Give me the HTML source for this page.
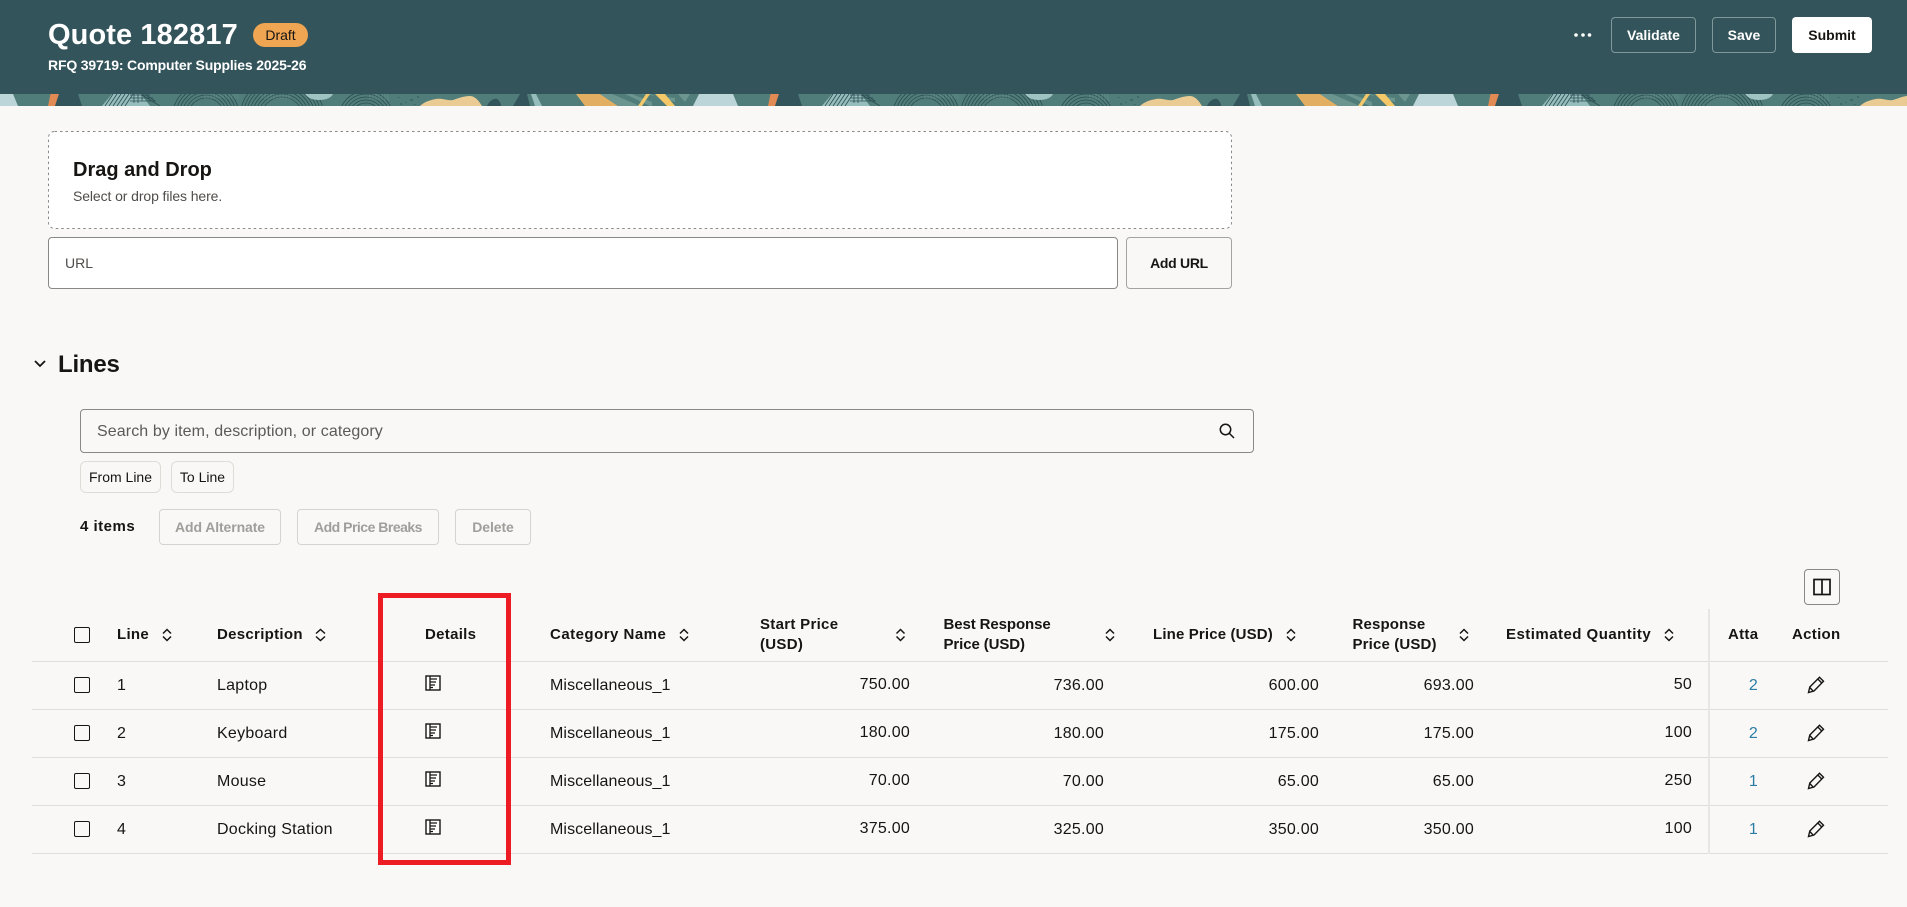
<!DOCTYPE html>
<html lang="en">
<head>
<meta charset="utf-8">
<title>Quote 182817</title>
<style>
*{box-sizing:border-box}
html,body{margin:0;padding:0;width:1907px;height:907px;overflow:hidden;background:#faf8f6;font-family:"Liberation Sans",sans-serif;color:#161513}
.a{position:absolute;white-space:nowrap}
.hd{position:absolute;left:0;top:0;width:1907px;height:94px;background:#33545a}
.btn{position:absolute;display:flex;align-items:center;justify-content:center;border-radius:4px;font-size:14px;font-weight:700;white-space:nowrap}
.t{position:absolute;font-size:16px;line-height:20px;letter-spacing:.25px;white-space:nowrap}
.c{letter-spacing:.09px}
.r{text-align:right}
.h{position:absolute;font-size:15px;font-weight:700;line-height:20px;letter-spacing:.3px;white-space:nowrap}
.line{position:absolute;left:32px;width:1856px;height:1px;background:#dfddda}
.cb{position:absolute;left:74px;width:16px;height:16px;border:1.6px solid #161513;border-radius:2px}
.link{color:#2a7da6}
svg{position:absolute;overflow:visible}
</style>
</head>
<body>
<div class="hd"></div>
<svg style="left:0;top:94px;overflow:hidden" width="1907" height="12" viewBox="0 0 1907 12">
<defs>
<clipPath id="c"><rect width="1907" height="12"/></clipPath>
<g id="p">
<path d="M0 0H13L18 12H0Z" fill="#bcd5d9"/>
<path d="M50.500 0H59L55 12H48Z" fill="#e28a54"/>
<path d="M59 0H78L82 12H55Z" fill="#33545a"/>
<path d="M112 0H141L150 12H102Z" fill="#94bdbc"/>
<g fill="none" stroke="#2c4c52" stroke-width=".8">
<path d="M113 0 105 12M117 0 109 12M121 0 113 12M125 0 117 12M129 0 121 12M133 0 125 12"/>
<path d="M130 1H150M130 4H153M130 7H156M134 0V9M138 0V9M142 0V7"/>
<path d="M142 1 160 12M146 1 155 7"/>
<circle cx="206" cy="22" r="33"/><circle cx="206" cy="22" r="30"/><circle cx="206" cy="22" r="27"/><circle cx="206" cy="22" r="24"/><circle cx="206" cy="22" r="21"/><circle cx="206" cy="22" r="18"/>
<circle cx="282" cy="24" r="42"/><circle cx="282" cy="24" r="39"/><circle cx="282" cy="24" r="36"/><circle cx="282" cy="24" r="33"/><circle cx="282" cy="24" r="30"/><circle cx="282" cy="24" r="27"/><circle cx="282" cy="24" r="24"/><circle cx="282" cy="24" r="21"/>
<circle cx="366" cy="24" r="27"/><circle cx="366" cy="24" r="24"/><circle cx="366" cy="24" r="21"/><circle cx="366" cy="24" r="18"/><circle cx="366" cy="24" r="15"/>
</g>
<g fill="none" stroke="#7fa8a5" stroke-width=".6" opacity=".6">
<path d="M205 0V5M208 0V5M211 0V5M214 0V5M217 0V4M220 0V4M223 0V4M226 0V4M229 0V5M232 0V5M235 0V5M238 0V5"/>
<path d="M262 0V5M265 0V5M268 0V5M271 0V5M274 0V5M277 0V5M280 0V5M283 0V5M286 0V5M289 0V5"/>
<path d="M370 0V5M373 0V5M376 0V6M379 0V6M382 0V6M385 0V7M388 0V7"/>
</g>
<path d="M305 0H333C331 4 326 6 319 6 312 6 308 4 305 0Z" fill="#9fc3c2"/>
<path d="M398 3h2v1h-2zM410 5h3v2h-3zM405 8h2v1h-2zM417 2h2v2h-2zM400 9h2v2h-2zM414 10h2v1h-2z" fill="#3e6a68"/>
</g>
<g id="q">
<path d="M420 12C424 8 430 6 436 5 443 4 448 7 453 6 459 4 464 2 470 2 475 2 479 7 482 12Z" fill="#ebcb94"/>
<path d="M487 12C489 7 494 4 497 5 500 7 501 10 501 12Z" fill="#33545a"/>
<path d="M520 0H527L530 12H513Z" fill="#33545a"/>
<path d="M531 0H536L542 12H535Z" fill="#94bdbc"/>
<path d="M576 0H600L618 12H585Z" fill="#e2ae62"/>
<path d="M600 0H612L640 12H618ZM625 0H632L652 8V12H650ZM640 0H650L675 8V4Z" fill="#6c9590"/>
<path d="M646 0H650L642 12H638Z" fill="#f4c868"/>
<path d="M655 0H665L675 12H667Z" fill="#f4c868"/>
<path d="M678 0H690L685 8Z" fill="#6c9590"/>
<path d="M699 0H720V12H693Z" fill="#bcd5d9"/>
</g>
</defs>
<g clip-path="url(#c)">
<rect width="1907" height="12" fill="#507d79"/>
<use href="#p"/><use href="#q"/>
<use href="#p" x="720"/><use href="#q" x="720"/>
<use href="#p" x="1440"/>
<path d="M1860 12C1864 8 1870 6 1876 5 1883 4 1888 7 1893 6 1899 4 1904 2 1907 2V12Z" fill="#ebcb94"/>
</g>
</svg>

<div class="a" style="left:48px;top:18px;font-size:29px;line-height:34px;font-weight:700;color:#fff;letter-spacing:.1px">Quote 182817</div>
<div class="a" style="left:253px;top:23px;width:55px;height:24px;background:#efa552;border-radius:12px;font-size:14px;line-height:24px;text-align:center;color:#161513">Draft</div>
<div class="a" style="left:48px;top:55px;font-size:14px;line-height:20px;font-weight:700;color:#fff;letter-spacing:-.17px">RFQ 39719: Computer Supplies 2025-26</div>

<svg style="left:1574px;top:33px" width="18" height="4" viewBox="0 0 18 4" fill="#fff"><circle cx="2" cy="2" r="1.8"/><circle cx="9" cy="2" r="1.8"/><circle cx="15.500" cy="2" r="1.8"/></svg>
<div class="btn" style="left:1611px;top:17px;width:85px;height:36px;border:1px solid #7f989b;color:#fff">Validate</div>
<div class="btn" style="left:1712px;top:17px;width:64px;height:36px;border:1px solid #7f989b;color:#fff">Save</div>
<div class="btn" style="left:1792px;top:17px;width:80px;height:36px;background:#fff;color:#161513">Submit</div>

<div class="a" style="left:48px;top:131px;width:1184px;height:98px;background:#fff;border-radius:6px"></div>
<svg style="left:48px;top:131px" width="1184" height="98" viewBox="0 0 1184 98" fill="none"><rect x=".5" y=".5" width="1183" height="97" rx="6" stroke="#8a8885" stroke-width="1" stroke-dasharray="2.500 3"/></svg>
<div class="a" style="left:73px;top:158px;font-size:20px;line-height:24px;font-weight:700">Drag and Drop</div>
<div class="a" style="left:73px;top:186px;font-size:14px;line-height:20px;color:#4f4d4a;letter-spacing:-.1px">Select or drop files here.</div>
<div class="a" style="left:48px;top:237px;width:1070px;height:52px;background:#fff;border:1px solid #8a8885;border-radius:4px"></div>
<div class="a" style="left:65px;top:253px;font-size:14px;line-height:20px;color:#4f4d4a">URL</div>
<div class="btn" style="left:1126px;top:237px;width:106px;height:52px;border:1px solid #a5a3a0;background:#faf8f6;color:#161513;letter-spacing:-.3px">Add URL</div>

<svg style="left:33px;top:358px" width="14" height="12" viewBox="0 0 14 12" fill="none" stroke="#161513" stroke-width="1.8"><path d="M2 3 7 8 12 3"/></svg>
<div class="a" style="left:58px;top:350px;font-size:24px;line-height:30px;font-weight:700;letter-spacing:-.2px">Lines</div>

<div class="a" style="left:80px;top:409px;width:1174px;height:44px;border:1px solid #8a8885;border-radius:4px;background:#faf8f6"></div>
<div class="a" style="left:97px;top:422px;font-size:16px;line-height:20px;color:#5c5a57;letter-spacing:.1px">Search by item, description, or category</div>
<svg style="left:1219px;top:423px" width="16" height="16" viewBox="0 0 16 16" fill="none" stroke="#161513" stroke-width="1.5"><circle cx="6.500" cy="6.500" r="5.200"/><path d="M10.500 10.500 15 15"/></svg>

<div class="btn" style="left:80px;top:461px;width:81px;height:32px;border:1px solid #dfdcd8;border-radius:6px;font-weight:400;font-size:14px">From Line</div>
<div class="btn" style="left:171px;top:461px;width:63px;height:32px;border:1px solid #dfdcd8;border-radius:6px;font-weight:400;font-size:14px">To Line</div>

<div class="a" style="left:80px;top:517px;font-size:15px;line-height:20px;font-weight:700;letter-spacing:.5px">4 items</div>
<div class="btn" style="left:159px;top:509px;width:122px;height:36px;border:1px solid #d5d3d0;color:#a09e9b;letter-spacing:-.1px">Add Alternate</div>
<div class="btn" style="left:297px;top:509px;width:142px;height:36px;border:1px solid #d5d3d0;color:#a09e9b;letter-spacing:-.5px">Add Price Breaks</div>
<div class="btn" style="left:455px;top:509px;width:76px;height:36px;border:1px solid #d5d3d0;color:#a09e9b;letter-spacing:-.1px">Delete</div>

<div class="a" style="left:1804px;top:569px;width:36px;height:36px;border:1px solid #8a8885;border-radius:4px"></div>
<svg style="left:1813px;top:578px" width="18" height="18" viewBox="0 0 18 18" fill="none" stroke="#161513" stroke-width="1.7"><rect x="1" y="1.500" width="16" height="15"/><path d="M9 1.500V16.500"/></svg>

<!-- table lines -->
<div class="line" style="top:661px"></div>
<div class="line" style="top:709px"></div>
<div class="line" style="top:757px"></div>
<div class="line" style="top:805px"></div>
<div class="line" style="top:853px"></div>
<div class="a" style="left:1708px;top:609px;width:2px;height:245px;background:#e8e6e3"></div>

<!-- header -->
<div class="cb" style="top:627px"></div>
<div class="h" style="left:117px;top:625px">Line</div>
<div class="h" style="left:217px;top:625px">Description</div>
<div class="h" style="left:425px;top:625px">Details</div>
<div class="h" style="left:550px;top:625px;letter-spacing:.48px">Category Name</div>
<div class="h" style="left:760px;top:615px">Start Price<br>(USD)</div>
<div class="h" style="left:943.500px;top:615px;letter-spacing:-.1px">Best Response<br>Price (USD)</div>
<div class="h" style="left:1153px;top:625px;letter-spacing:.15px">Line Price (USD)</div>
<div class="h" style="left:1352.500px;top:615px;letter-spacing:.15px">Response<br>Price (USD)</div>
<div class="h" style="left:1506px;top:625px;letter-spacing:.47px">Estimated Quantity</div>
<div class="h" style="left:1728px;top:625px">Atta</div>
<div class="h" style="left:1792px;top:625px">Action</div>

<svg style="position:absolute;left:0;top:0" width="1907" height="907" viewBox="0 0 1907 907" fill="none" stroke="#161513" stroke-width="1.5">
<path d="M163 633.500 167 629.500 171 633.500M163 636.500 167 640.500 171 636.500"/>
<path d="M316 633.500 320.500 629.500 325 633.500M316 636.500 320.500 640.500 325 636.500"/>
<path d="M680 633.500 684 629.500 688 633.500M680 636.500 684 640.500 688 636.500"/>
<path d="M896.500 633.500 900.500 629.500 904.500 633.500M896.500 636.500 900.500 640.500 904.500 636.500"/>
<path d="M1106 633.500 1110 629.500 1114 633.500M1106 636.500 1110 640.500 1114 636.500"/>
<path d="M1287 633.500 1291 629.500 1295 633.500M1287 636.500 1291 640.500 1295 636.500"/>
<path d="M1460 633.500 1464 629.500 1468 633.500M1460 636.500 1464 640.500 1468 636.500"/>
<path d="M1665 633.500 1669 629.500 1673 633.500M1665 636.500 1669 640.500 1673 636.500"/>
</svg>

<!-- row 1 -->
<div class="cb" style="top:677px"></div>
<div class="t" style="left:117px;top:676px">1</div>
<div class="t" style="left:217px;top:676px">Laptop</div>
<svg style="left:425px;top:675px" width="16" height="16" viewBox="0 0 16 16"><rect x="1" y="1" width="14" height="14" fill="#fff" stroke="#161513" stroke-width="1.400"/><path d="M5 1V15M5 4H12M5 7H11M5 10H10M5 12.500H8" stroke="#161513" stroke-width="1.300" fill="none"/></svg>
<div class="t c" style="left:550px;top:676px">Miscellaneous_1</div>
<div class="t r" style="right:997px;top:675px">750.00</div>
<div class="t r" style="right:803px;top:676px">736.00</div>
<div class="t r" style="right:588px;top:676px">600.00</div>
<div class="t r" style="right:433px;top:676px">693.00</div>
<div class="t r" style="right:215px;top:675px">50</div>
<div class="t r link" style="right:149px;top:676px">2</div>
<svg style="left:1807px;top:676px" width="18" height="18" viewBox="0 0 18 18" fill="none" stroke="#161513" stroke-width="1.400"><path d="M1.500 16.500 2.800 11 12.500 1.300 16.500 5.300 7 15ZM10.800 3 14.800 7M2.800 11.500 6.500 15.500"/></svg>

<!-- row 2 -->
<div class="cb" style="top:725px"></div>
<div class="t" style="left:117px;top:724px">2</div>
<div class="t" style="left:217px;top:724px">Keyboard</div>
<svg style="left:425px;top:723px" width="16" height="16" viewBox="0 0 16 16"><rect x="1" y="1" width="14" height="14" fill="#fff" stroke="#161513" stroke-width="1.400"/><path d="M5 1V15M5 4H12M5 7H11M5 10H10M5 12.500H8" stroke="#161513" stroke-width="1.300" fill="none"/></svg>
<div class="t c" style="left:550px;top:724px">Miscellaneous_1</div>
<div class="t r" style="right:997px;top:723px">180.00</div>
<div class="t r" style="right:803px;top:724px">180.00</div>
<div class="t r" style="right:588px;top:724px">175.00</div>
<div class="t r" style="right:433px;top:724px">175.00</div>
<div class="t r" style="right:215px;top:723px">100</div>
<div class="t r link" style="right:149px;top:724px">2</div>
<svg style="left:1807px;top:724px" width="18" height="18" viewBox="0 0 18 18" fill="none" stroke="#161513" stroke-width="1.400"><path d="M1.500 16.500 2.800 11 12.500 1.300 16.500 5.300 7 15ZM10.800 3 14.800 7M2.800 11.500 6.500 15.500"/></svg>

<!-- row 3 -->
<div class="cb" style="top:773px"></div>
<div class="t" style="left:117px;top:772px">3</div>
<div class="t" style="left:217px;top:772px">Mouse</div>
<svg style="left:425px;top:771px" width="16" height="16" viewBox="0 0 16 16"><rect x="1" y="1" width="14" height="14" fill="#fff" stroke="#161513" stroke-width="1.400"/><path d="M5 1V15M5 4H12M5 7H11M5 10H10M5 12.500H8" stroke="#161513" stroke-width="1.300" fill="none"/></svg>
<div class="t c" style="left:550px;top:772px">Miscellaneous_1</div>
<div class="t r" style="right:997px;top:771px">70.00</div>
<div class="t r" style="right:803px;top:772px">70.00</div>
<div class="t r" style="right:588px;top:772px">65.00</div>
<div class="t r" style="right:433px;top:772px">65.00</div>
<div class="t r" style="right:215px;top:771px">250</div>
<div class="t r link" style="right:149px;top:772px">1</div>
<svg style="left:1807px;top:772px" width="18" height="18" viewBox="0 0 18 18" fill="none" stroke="#161513" stroke-width="1.400"><path d="M1.500 16.500 2.800 11 12.500 1.300 16.500 5.300 7 15ZM10.800 3 14.800 7M2.800 11.500 6.500 15.500"/></svg>

<!-- row 4 -->
<div class="cb" style="top:821px"></div>
<div class="t" style="left:117px;top:820px">4</div>
<div class="t" style="left:217px;top:820px">Docking Station</div>
<svg style="left:425px;top:819px" width="16" height="16" viewBox="0 0 16 16"><rect x="1" y="1" width="14" height="14" fill="#fff" stroke="#161513" stroke-width="1.400"/><path d="M5 1V15M5 4H12M5 7H11M5 10H10M5 12.500H8" stroke="#161513" stroke-width="1.300" fill="none"/></svg>
<div class="t c" style="left:550px;top:820px">Miscellaneous_1</div>
<div class="t r" style="right:997px;top:819px">375.00</div>
<div class="t r" style="right:803px;top:820px">325.00</div>
<div class="t r" style="right:588px;top:820px">350.00</div>
<div class="t r" style="right:433px;top:820px">350.00</div>
<div class="t r" style="right:215px;top:819px">100</div>
<div class="t r link" style="right:149px;top:820px">1</div>
<svg style="left:1807px;top:820px" width="18" height="18" viewBox="0 0 18 18" fill="none" stroke="#161513" stroke-width="1.400"><path d="M1.500 16.500 2.800 11 12.500 1.300 16.500 5.300 7 15ZM10.800 3 14.800 7M2.800 11.500 6.500 15.500"/></svg>

<!-- red annotation -->
<div class="a" style="left:378px;top:593px;width:133px;height:272px;border:5px solid #ed1c24"></div>
</body>
</html>
